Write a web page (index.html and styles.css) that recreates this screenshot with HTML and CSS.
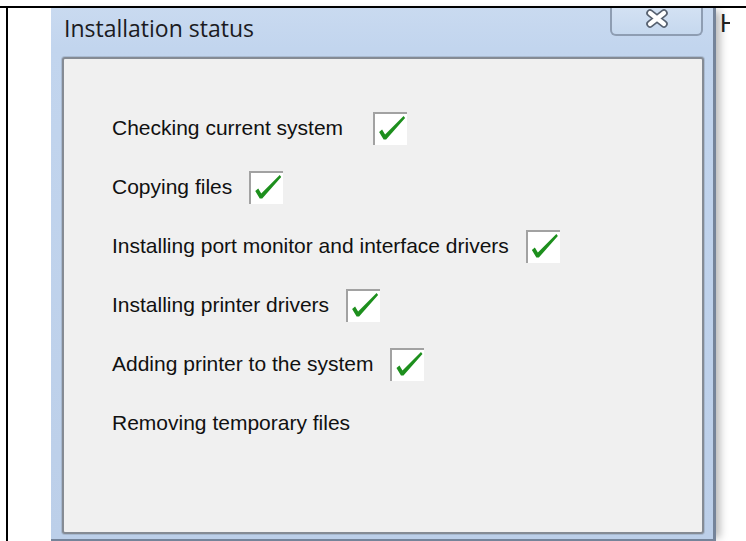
FILE: index.html
```html
<!DOCTYPE html>
<html lang="en">
<head>
<meta charset="utf-8">
<title>Installation status</title>
<link rel="stylesheet" href="styles.css">
</head>
<body>
<div class="sheet">
  <div class="cell">
    <div class="window">
      <div class="titlebar">
        <span class="title">Installation status</span>
        <button class="close" type="button" aria-label="Close">
          <svg width="24" height="20" viewBox="0 0 24 20">
            <path d="M5 4 L19 15 M19 4 L5 15" stroke="#56606f" stroke-width="7.5" stroke-linecap="round" fill="none"/>
            <path d="M5 4 L19 15 M19 4 L5 15" stroke="#ffffff" stroke-width="4.2" stroke-linecap="round" fill="none"/>
          </svg>
        </button>
      </div>
      <div class="client">
        <ul class="steps">
          <li class="step gap-wide"><span class="label">Checking current system</span><span class="tick"></span></li>
          <li class="step"><span class="label">Copying files</span><span class="tick"></span></li>
          <li class="step"><span class="label">Installing port monitor and interface drivers</span><span class="tick"></span></li>
          <li class="step"><span class="label">Installing printer drivers</span><span class="tick"></span></li>
          <li class="step"><span class="label">Adding printer to the system</span><span class="tick"></span></li>
          <li class="step"><span class="label">Removing temporary files</span></li>
        </ul>
      </div>
    </div>
    <div class="behind"><span>H</span></div>
  </div>
</div>
</body>
</html>
```
FILE: styles.css
```css
html, body {
  margin: 0;
  padding: 0;
  background: #ffffff;
}

body {
  width: 746px;
  height: 541px;
  overflow: hidden;
  font-family: "Liberation Sans", Arial, sans-serif;
}

/* table cell that holds the dialog */
.sheet {
  padding-top: 6px;
}

.cell {
  position: relative;
  border-top: 2px solid #000;
  height: 533px;
  display: flex;
}

.cell::before {
  content: "";
  width: 2px;
  margin-left: 6px;
  background: #000;
  flex: none;
}

/* dialog window */
.window {
  margin-left: 43px;
  width: 662px;
  height: 531px;
  flex: none;
  display: flex;
  flex-direction: column;
  background: linear-gradient(to bottom, #c9daf0 0, #c2d5ee 40px, #bccfe9 100%);
  border-right: 3px solid #75849a;
  border-bottom: 2px solid #75849a;
  box-shadow: 7px 0 8px -3px rgba(0, 0, 0, 0.28);
  position: relative;
  z-index: 1;
}

.titlebar {
  height: 49px;
  display: flex;
  align-items: flex-start;
  flex: none;
}

.title {
  padding: 7px 0 0 13px;
  font-family: "Open Sans", "Noto Sans", sans-serif;
  font-size: 23px;
  line-height: 27px;
  color: #1b1b22;
}

.close {
  margin-left: auto;
  margin-right: 10px;
  width: 93px;
  height: 28px;
  padding: 1px 0 0;
  border: 2px solid #8e9db2;
  border-top: none;
  border-radius: 0 0 6px 6px;
  background: linear-gradient(to bottom, #d3e1f3, #c6d8ee);
  display: flex;
  align-items: flex-start;
  justify-content: center;
}

.client {
  flex: 1;
  margin: 0 9px 5px 11px;
  background: #f0f0f0;
  border: 2px solid #858b94;
  border-radius: 3px;
  box-shadow: 0 0 0 1px rgba(140, 155, 175, 0.45);
}

.steps {
  list-style: none;
  margin: 0;
  padding: 39px 0 0 48px;
  display: flex;
  flex-direction: column;
}

.step {
  height: 59px;
  display: flex;
  align-items: center;
  gap: 17px;
}

.step.gap-wide {
  gap: 30px;
}

.label {
  font-size: 21px;
  line-height: 24px;
  color: #111;
}

/* completed step: white picture box with a green tick */
.tick {
  width: 32px;
  height: 31px;
  background: #fff;
  border-top: 2px solid #a2a2a2;
  border-left: 2px solid #a2a2a2;
  position: relative;
  flex: none;
  margin-top: 2px;
}

.tick::after {
  content: "";
  position: absolute;
  left: 0;
  top: 0;
  width: 32px;
  height: 31px;
  background: #1d8f1d;
  clip-path: polygon(4px 18px, 7px 15.5px, 10px 20.5px, 28.5px 2px, 30px 4px, 11px 25.5px, 8.5px 25.5px);
}

/* edge of the next column showing past the window */
.behind {
  position: absolute;
  left: 720px;
  top: 0;
  width: 10px;
  height: 30px;
  overflow: hidden;
}

.behind span {
  display: block;
  font-size: 25px;
  line-height: 30px;
  color: #222;
}
```
